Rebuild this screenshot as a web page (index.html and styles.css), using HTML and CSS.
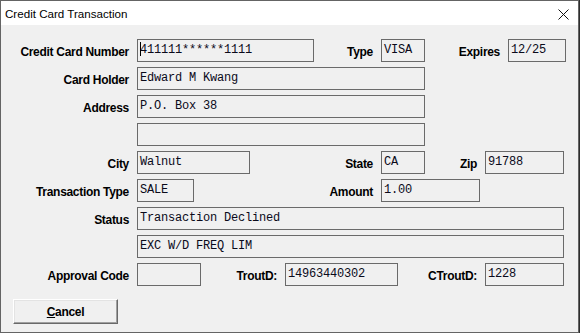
FILE: index.html
```html
<!DOCTYPE html>
<html lang="en">

<head>
    <meta charset="UTF-8">
    <title>Credit Card Transaction</title>
    <link rel="stylesheet" href="styles.css">
</head>

<body>
    <div class="window">
        <div class="titlebar">
            <span class="title">Credit Card Transaction</span>
            <svg class="close" width="11" height="11" viewBox="0 0 11 11">
                <path d="M0.5 0.5 L10.5 10.5 M10.5 0.5 L0.5 10.5" stroke="#111" stroke-width="1" fill="none" />
            </svg>
        </div>
        <div class="form">
            <div class="row">
                <span class="lbl lbl-first">Credit Card Number</span>
                <div class="field f-card caret">411111******1111</div>
                <span class="lbl lbl-type">Type</span>
                <div class="field f-small">VISA</div>
                <span class="lbl lbl-expires">Expires</span>
                <div class="field f-expires">12/25</div>
            </div>
            <div class="row">
                <span class="lbl lbl-first">Card Holder</span>
                <div class="field f-wide">Edward M Kwang</div>
            </div>
            <div class="row">
                <span class="lbl lbl-first">Address</span>
                <div class="field f-wide">P.O. Box 38</div>
            </div>
            <div class="row">
                <span class="lbl lbl-first"></span>
                <div class="field f-wide"></div>
            </div>
            <div class="row">
                <span class="lbl lbl-first">City</span>
                <div class="field f-city">Walnut</div>
                <span class="lbl lbl-state">State</span>
                <div class="field f-small">CA</div>
                <span class="lbl lbl-zip">Zip</span>
                <div class="field f-right">91788</div>
            </div>
            <div class="row">
                <span class="lbl lbl-first">Transaction Type</span>
                <div class="field f-ttype">SALE</div>
                <span class="lbl lbl-amount">Amount</span>
                <div class="field f-amount">1.00</div>
            </div>
            <div class="row">
                <span class="lbl lbl-first">Status</span>
                <div class="field f-status">Transaction Declined</div>
            </div>
            <div class="row">
                <span class="lbl lbl-first"></span>
                <div class="field f-status">EXC W/D FREQ LIM</div>
            </div>
            <div class="row">
                <span class="lbl lbl-first">Approval Code</span>
                <div class="field f-approval"></div>
                <span class="lbl lbl-trout">TroutD:</span>
                <div class="field f-trout">14963440302</div>
                <span class="lbl lbl-ctrout">CTroutD:</span>
                <div class="field f-right">1228</div>
            </div>
            <button class="btn"><u>C</u>ancel</button>
        </div>
    </div>
</body>

</html>
```

FILE: styles.css
```css
* {
    margin: 0;
    padding: 0;
    box-sizing: border-box;
}

body {
    background: #2e2e2e;
    font-family: "Liberation Sans", Arial, sans-serif;
    color: #000;
}

.window {
    width: 579px;
    height: 333px;
    background: #f0f0f0;
    border: 1px solid #646464;
    display: flex;
    flex-direction: column;
}

.titlebar {
    height: 24px;
    background: #fff;
    display: flex;
    align-items: center;
    justify-content: space-between;
    padding-left: 4px;
    padding-right: 9px;
    font-size: 11.6px;
}

.close {
    margin-top: 2px;
}

.form {
    padding-top: 14px;
    display: flex;
    flex-direction: column;
    gap: 5px;
}

.row {
    display: flex;
    align-items: center;
    height: 23px;
}

.lbl {
    font-weight: bold;
    font-size: 12px;
    letter-spacing: -0.3px;
    text-align: right;
    padding-right: 8px;
    padding-top: 2px;
    white-space: nowrap;
}

.lbl-first { width: 136px; }
.lbl-type { width: 67px; }
.lbl-expires { width: 83px; }
.lbl-state { width: 131px; }
.lbl-zip { width: 60px; }
.lbl-amount { width: 187px; }
.lbl-trout { width: 84px; }
.lbl-ctrout { width: 87px; }

.field {
    height: 23px;
    border: 1px solid #6a6a6a;
    font-family: "Liberation Mono", "Courier New", monospace;
    font-size: 12px;
    letter-spacing: -0.2px;
    line-height: 14px;
    padding: 3px 0 0 2px;
    white-space: pre;
    color: #0a0a1a;
}

.f-card { width: 177px; }
.f-small { width: 44px; }
.f-expires { width: 58px; }
.f-wide { width: 288px; }
.f-city { width: 113px; }
.f-right { width: 79px; }
.f-ttype { width: 57px; }
.f-amount { width: 99px; }
.f-status { width: 427px; }
.f-approval { width: 64px; }
.f-trout { width: 113px; }

.caret {
    position: relative;
}

.caret::before {
    content: "";
    position: absolute;
    left: 2px;
    top: 2px;
    width: 1px;
    height: 14px;
    background: #000;
}

.btn {
    margin: 8px 0 0 12px;
    width: 105px;
    height: 25px;
    font-family: "Liberation Sans", Arial, sans-serif;
    font-weight: bold;
    font-size: 12px;
    letter-spacing: -0.3px;
    color: #000;
    background: #f0f0f0;
    border: 1px solid;
    border-color: #fff #696969 #696969 #fff;
    box-shadow: inset -1px -1px 0 #a0a0a0, inset 1px 1px 0 #e3e3e3;
    align-self: flex-start;
}
```
